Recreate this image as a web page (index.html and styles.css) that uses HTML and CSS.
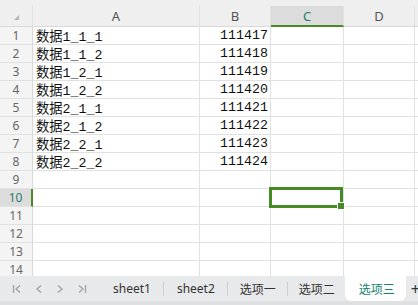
FILE: index.html
```html
<!DOCTYPE html>
<html lang="zh-CN">
<head>
<meta charset="UTF-8">
<meta name="viewport" content="width=device-width, initial-scale=1.0">
<title>sheet</title>
<link rel="stylesheet" href="styles.css">
</head>
<body>
  <div class="top-strip"></div>
  <div class="sheet">
    <div class="grid">
      <!-- column headers -->
      <div class="corner"><span class="corner-mark"></span></div>
      <div class="col-head">A</div>
      <div class="col-head">B</div>
      <div class="col-head active">C</div>
      <div class="col-head">D</div>
      <div class="col-head edge"></div>

      <div class="row-head">1</div><div class="cell">数据1_1_1</div><div class="cell num">111417</div><div class="cell"></div><div class="cell"></div><div class="cell edge"></div>
      <div class="row-head">2</div><div class="cell">数据1_1_2</div><div class="cell num">111418</div><div class="cell"></div><div class="cell"></div><div class="cell edge"></div>
      <div class="row-head">3</div><div class="cell">数据1_2_1</div><div class="cell num">111419</div><div class="cell"></div><div class="cell"></div><div class="cell edge"></div>
      <div class="row-head">4</div><div class="cell">数据1_2_2</div><div class="cell num">111420</div><div class="cell"></div><div class="cell"></div><div class="cell edge"></div>
      <div class="row-head">5</div><div class="cell">数据2_1_1</div><div class="cell num">111421</div><div class="cell"></div><div class="cell"></div><div class="cell edge"></div>
      <div class="row-head">6</div><div class="cell">数据2_1_2</div><div class="cell num">111422</div><div class="cell"></div><div class="cell"></div><div class="cell edge"></div>
      <div class="row-head">7</div><div class="cell">数据2_2_1</div><div class="cell num">111423</div><div class="cell"></div><div class="cell"></div><div class="cell edge"></div>
      <div class="row-head">8</div><div class="cell">数据2_2_2</div><div class="cell num">111424</div><div class="cell"></div><div class="cell"></div><div class="cell edge"></div>
      <div class="row-head">9</div><div class="cell"></div><div class="cell"></div><div class="cell"></div><div class="cell"></div><div class="cell edge"></div>
      <div class="row-head active">10</div><div class="cell"></div><div class="cell"></div><div class="cell"></div><div class="cell"></div><div class="cell edge"></div>
      <div class="row-head">11</div><div class="cell"></div><div class="cell"></div><div class="cell"></div><div class="cell"></div><div class="cell edge"></div>
      <div class="row-head">12</div><div class="cell"></div><div class="cell"></div><div class="cell"></div><div class="cell"></div><div class="cell edge"></div>
      <div class="row-head">13</div><div class="cell"></div><div class="cell"></div><div class="cell"></div><div class="cell"></div><div class="cell edge"></div>
      <div class="row-head">14</div><div class="cell"></div><div class="cell"></div><div class="cell"></div><div class="cell"></div><div class="cell edge"></div>
    </div>
    <!-- selected cell C10 -->
    <div class="selection"><span class="handle"></span></div>
  </div>

  <div class="tab-bar">
    <div class="nav">
      <svg width="10" height="10" viewBox="0 0 10 10"><path d="M1.5 1v8M8 1.5L4 5l4 3.5" fill="none" stroke="#a0a0a0" stroke-width="1.3"/></svg>
      <svg width="8" height="10" viewBox="0 0 8 10"><path d="M6 1.5L2 5l4 3.5" fill="none" stroke="#a0a0a0" stroke-width="1.3"/></svg>
      <svg width="8" height="10" viewBox="0 0 8 10"><path d="M2 1.5L6 5l-4 3.5" fill="none" stroke="#a0a0a0" stroke-width="1.3"/></svg>
      <svg width="10" height="10" viewBox="0 0 10 10"><path d="M2 1.5L6 5l-4 3.5M8.5 1v8" fill="none" stroke="#a0a0a0" stroke-width="1.3"/></svg>
    </div>
    <div class="tab t1">sheet1</div>
    <div class="tab t2">sheet2</div>
    <div class="tab t3">选项一</div>
    <div class="tab t4">选项二</div>
    <div class="tab current">选项三</div>
    <div class="add">+</div>
  </div>
  <div class="bottom-strip"></div>
</body>
</html>
```

FILE: styles.css
```css
body {
  margin: 0;
  padding: 0;
  width: 418px;
  height: 305px;
  overflow: hidden;
  background-color: #fff;
  font-family: "Noto Sans", "Noto Sans CJK SC", sans-serif;
}
.top-strip {
  height: 6px;
  background-color: #efefef;
}
.sheet {
  position: relative; /* selection box sits on top of the grid */
  height: 270px;
  overflow: hidden;
}
.grid {
  display: grid;
  grid-template-columns: 33px 167px 71px 73px 71px 3px;
  grid-template-rows: 21px repeat(14, 18px);
}
.grid > div {
  box-sizing: border-box;
  border-right: 1px solid #e1e1e1;
  border-bottom: 1px solid #e1e1e1;
}
.corner,
.col-head {
  background-color: #efefef;
  border-bottom-color: #d9d9d9 !important;
}
.corner {
  position: relative;
}
.corner-mark {
  position: absolute;
  left: 14px;
  top: 9px;
  width: 0;
  height: 0;
  border-left: 5px solid transparent;
  border-bottom: 5px solid #b5b5b5;
}
.col-head {
  display: flex;
  align-items: center;
  justify-content: center;
  font-size: 13px;
  color: #555;
}
.col-head.active {
  background-color: #dcdcdc;
  color: #1f7c6a;
  border-bottom: 2px solid #478b27 !important;
}
.col-head.edge,
.cell.edge {
  border-right: none !important;
}
.row-head {
  display: flex;
  align-items: center;
  justify-content: center;
  background-color: #f4f4f4;
  border-right-color: #d9d9d9 !important;
  font-size: 12px;
  color: #666;
}
.row-head.active {
  background-color: #dcdcdc;
  color: #1f7c6a;
  border-right: 2px solid #478b27 !important;
}
.cell {
  display: flex;
  align-items: center;
  padding-left: 3px;
  font-family: "Liberation Mono", "Noto Sans CJK SC", monospace;
  font-size: 13.3px;
  color: #111;
  white-space: nowrap;
}
.cell.num {
  justify-content: flex-end;
  padding-left: 0;
  padding-right: 2px;
}
.selection {
  position: absolute;
  left: 269px;
  top: 181px;
  width: 74px;
  height: 21px;
  box-sizing: border-box;
  border: 3px solid #458b26;
}
.handle {
  position: absolute;
  right: -5px;
  bottom: -5px;
  width: 6px;
  height: 6px;
  background-color: #458b26;
  border: 1px solid #fff;
}
.tab-bar {
  display: flex;
  align-items: stretch;
  height: 25px;
  background-color: #e8e9ea;
  font-size: 12px;
  color: #333;
  white-space: nowrap;
}
.tab-bar > * {
  flex-shrink: 0;
}
.nav {
  display: flex;
  align-items: center;
  width: 100px;
  padding-left: 12px;
  box-sizing: border-box;
  gap: 13px;
}
.tab {
  display: flex;
  align-items: center;
  position: relative;
}
.tab::after {
  content: "";
  position: absolute;
  right: 0;
  top: 6px;
  bottom: 5px;
  width: 1px;
  background-color: #cfcfcf;
}
.t1, .t2 { padding: 0 13px; }
.t3 { padding: 0 12px; }
.t4 { padding: 0 10px 0 11px; }
.t4::after { display: none; }
.tab.current {
  padding: 0 11px 0 14px;
  background-color: #fff;
  color: #16836a;
  border-radius: 0 0 6px 6px;
}
.tab.current::after {
  display: none;
}
.add {
  display: flex;
  align-items: center;
  margin-left: 5px;
  font-size: 16px;
  color: #333;
}
.bottom-strip {
  height: 4px;
  background-color: #dfe0e1;
}
```
